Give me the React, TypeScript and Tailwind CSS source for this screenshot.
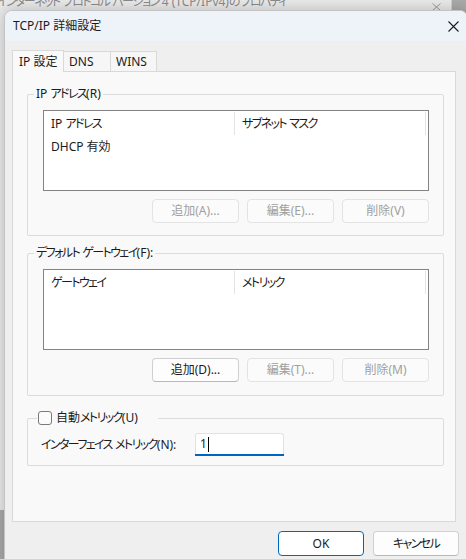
import React from "react";

// Yu Gothic UI draws katakana much narrower than Noto; tighten katakana runs only
const Jp: React.FC<{ t: string }> = ({ t }) => (
  <>
    {t.split(/([\u30A0-\u30FF]+)/).map((part, i) =>
      /[\u30A0-\u30FF]/.test(part) ? (
        <span key={i} className="tracking-[-1.6px]">
          {part}
        </span>
      ) : (
        <React.Fragment key={i}>{part}</React.Fragment>
      )
    )}
  </>
);

type BtnProps = {
  label: string;
  disabled?: boolean;
};

const GroupButton: React.FC<BtnProps> = ({ label, disabled }) => (
  <button
    type="button"
    disabled={disabled}
    className={
      disabled
        ? "w-[87px] h-[24px] rounded-[4px] border border-[#e3e3e3] bg-[#fbfbfb] text-[12px] leading-none text-[#a0a0a0]"
        : "w-[87px] h-[24px] rounded-[4px] border border-[#d0d0d0] border-b-[#b8b8b8] bg-[#fdfdfd] text-[12px] leading-none text-[#1b1b1b]"
    }
  >
    {label}
  </button>
);

const ListBox: React.FC<{ cols: [string, string]; rows?: string[] }> = ({ cols, rows = [] }) => (
  <div className="h-[81px] border border-[#838383] bg-white">
    <div className="flex h-[25px]">
      <div className="w-[191px] my-[1px] flex items-center pl-[7px] border-r border-[#e4e4e4]">
        <span><Jp t={cols[0]} /></span>
      </div>
      <div className="flex-1 my-[1px] flex items-center pl-[7px] border-r border-[#e4e4e4]">
        <span><Jp t={cols[1]} /></span>
      </div>
      <div className="w-[2px]" />
    </div>
    {rows.map((r) => (
      <div key={r} className="h-[21px] flex items-center pl-[7px]">
        {r}
      </div>
    ))}
  </div>
);

export default function App() {
  return (
    <div className="relative w-[466px] h-[559px] overflow-hidden bg-[#a9a9a9] font-['Noto_Sans','Noto_Sans_CJK_JP',sans-serif] [font-feature-settings:'palt'] text-[12px] text-[#1b1b1b]">
      {/* parent window behind */}
      <div className="absolute left-[-40px] top-[-30px] w-[492px] h-[540px] bg-[#e9e9e9] border-r border-[#cfcfcf]">
        <div className="absolute left-[37px] top-[24px] leading-[16px] text-[#8a8a8a] whitespace-nowrap">
          <Jp t="インターネット プロトコル バージョン 4 (TCP/IPv4)のプロパティ" />
        </div>
        <svg className="absolute left-[472px] top-[33px]" width="9" height="8" viewBox="0 0 9 8">
          <path d="M0.5 0.5L8.5 7.5M8.5 0.5L0.5 7.5" stroke="#9a9a9a" strokeWidth="1" />
        </svg>
      </div>

      {/* dialog */}
      <div className="absolute left-[4px] top-[10px] w-[464px] h-[560px] rounded-t-[8px] border border-[#c4c4c4] bg-[#efefef] shadow-[0_0_14px_rgba(0,0,0,0.22)] overflow-hidden">
        {/* title bar */}
        <div className="h-[30px] bg-[#eef2f9] flex items-center justify-between pl-[8px] pr-[8px]">
          <span className="leading-none">TCP/IP 詳細設定</span>
          <svg width="11" height="11" viewBox="0 0 11 11">
            <path d="M0.5 0.5L10.5 10.5M10.5 0.5L0.5 10.5" stroke="#1b1b1b" strokeWidth="1.1" />
          </svg>
        </div>

        <div className="pt-[9px] pl-[7px]">
          {/* tabs */}
          <div className="flex items-end h-[21px]">
            <div className="relative z-10 w-[52px] h-[22px] -mb-[1px] border border-b-0 border-[#d9d9d9] bg-[#f9f9f9] flex items-center pl-[6px]">
              IP 設定
            </div>
            <div className="w-[47px] h-[20px] border-t border-r border-[#d9d9d9] bg-[#f6f6f6] flex items-center pl-[5px]">
              DNS
            </div>
            <div className="w-[46px] h-[20px] border-t border-r border-[#d9d9d9] bg-[#f6f6f6] flex items-center pl-[5px]">
              WINS
            </div>
          </div>

          {/* tab panel */}
          <div className="w-[444px] h-[451px] border border-[#d9d9d9] bg-[#f9f9f9] pt-[14px] pl-[14px]">
            {/* IP addresses */}
            <fieldset className="w-[417px] border border-[#dcdcdc] rounded-[2px]">
              <legend className="ml-[6px] px-[2px] leading-[16px]"><Jp t="IP アドレス(R)" /></legend>
              <div className="pt-[8px] pl-[15px] pr-[14px] pb-[12px]">
                <ListBox cols={["IP アドレス", "サブネット マスク"]} rows={["DHCP 有効"]} />
                <div className="mt-[8px] flex justify-end gap-[8px]">
                  <GroupButton label="追加(A)..." disabled />
                  <GroupButton label="編集(E)..." disabled />
                  <GroupButton label="削除(V)" disabled />
                </div>
              </div>
            </fieldset>

            {/* default gateways */}
            <fieldset className="mt-[9px] w-[417px] border border-[#dcdcdc] rounded-[2px]">
              <legend className="ml-[6px] px-[2px] leading-[16px]"><Jp t="デフォルト ゲートウェイ(F):" /></legend>
              <div className="pt-[8px] pl-[15px] pr-[14px] pb-[13px]">
                <ListBox cols={["ゲートウェイ", "メトリック"]} />
                <div className="mt-[8px] flex justify-end gap-[8px]">
                  <GroupButton label="追加(D)..." />
                  <GroupButton label="編集(T)..." disabled />
                  <GroupButton label="削除(M)" disabled />
                </div>
              </div>
            </fieldset>

            {/* metric */}
            <fieldset className="mt-[14px] w-[417px] border border-[#dcdcdc] rounded-[2px]">
              <legend className="ml-[9px] pl-[1px] pr-[20px] leading-[16px]">
                <span className="flex items-center gap-[4px]">
                  <span className="w-[14px] h-[14px] rounded-[3px] border border-[#7a7a7a] bg-[#fbfbfb]" />
                  <span><Jp t="自動メトリック(U)" /></span>
                </span>
              </legend>
              <div className="pt-[7px] pl-[13px] pb-[9px] flex items-center">
                <span className="w-[154px] flex-none whitespace-nowrap"><Jp t="インターフェイス メトリック(N):" /></span>
                <div className="w-[89px] h-[23px] rounded-t-[3px] border border-b-0 border-[#e2e2e2] bg-white flex flex-col">
                  <div className="flex-1 flex items-center pl-[4px]">
                    1<span className="ml-[1px] w-px h-[15px] bg-black" />
                  </div>
                  <div className="h-[2px] bg-[#0067c0] -mx-[1px]" />
                </div>
              </div>
            </fieldset>
          </div>

          {/* dialog buttons */}
          <div className="mt-[9px] flex justify-end gap-[9px] pr-[8px]">
            <button
              type="button"
              className="w-[86px] h-[25px] rounded-[4px] border border-[#0067c0] bg-white text-[12px] leading-none"
            >
              OK
            </button>
            <button
              type="button"
              className="w-[86px] h-[25px] rounded-[4px] border border-[#d0d0d0] border-b-[#b8b8b8] bg-[#fdfdfd] text-[12px] leading-none"
            >
              <Jp t="キャンセル" />
            </button>
          </div>
        </div>
      </div>
    </div>
  );
}
